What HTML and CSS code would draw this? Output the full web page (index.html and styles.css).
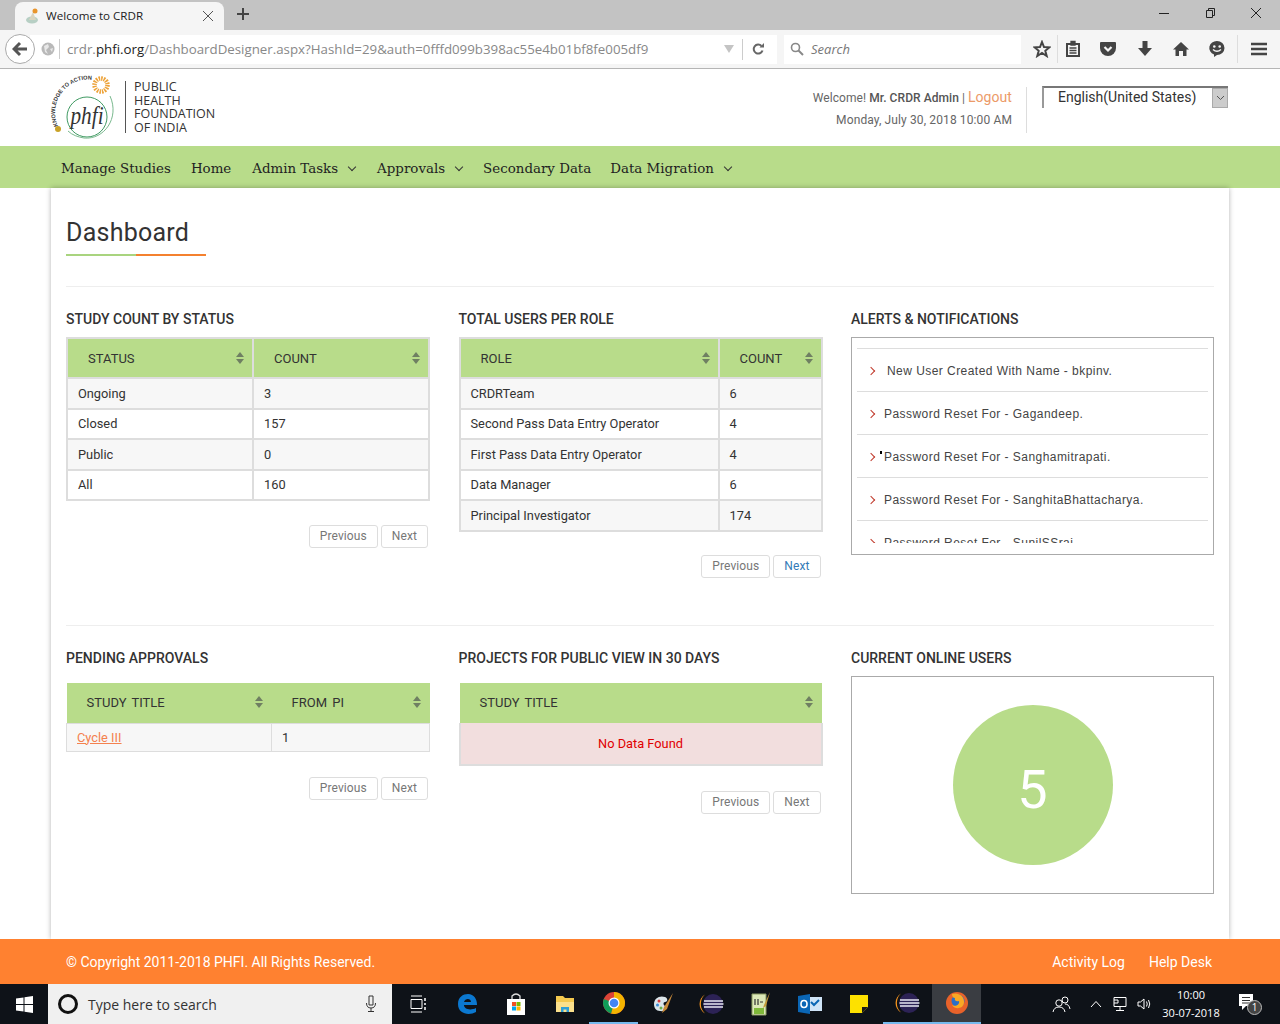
FILE: index.html
```html
<!DOCTYPE html>
<html lang="en">
<head>
    <meta charset="UTF-8">
    <title>Welcome to CRDR</title>
    <link rel="stylesheet" href="styles.css">
</head>
<body>
    <!-- Browser tab strip -->
    <div class="tabstrip">
        <div class="tab">
            <svg class="tab-icon" width="16" height="16" viewBox="0 0 16 16"><ellipse cx="7" cy="12" rx="6" ry="3.5" fill="#b7cfc4"/><path d="M4 12 L8 4 L11 12 Z" fill="#d9d4c0"/><circle cx="10" cy="3" r="2.5" fill="#e8942c"/></svg>
            <span class="tab-title">Welcome to CRDR</span>
            <svg class="tab-close" width="12" height="12" viewBox="0 0 12 12"><path d="M1 1 L11 11 M11 1 L1 11" stroke="#555" stroke-width="1" fill="none"/></svg>
        </div>
        <svg class="tab-new" width="14" height="14" viewBox="0 0 14 14"><path d="M7 1 V13 M1 7 H13" stroke="#444" stroke-width="2" fill="none"/></svg>
        <div class="win-controls">
            <svg width="12" height="12" viewBox="0 0 12 12"><path d="M1 6.5 H11" stroke="#222" fill="none"/></svg>
            <svg width="12" height="12" viewBox="0 0 12 12"><path d="M2.5 3.5 H8.5 V10.5 H2.5 Z M4.5 3.5 V1.5 H10.5 V8.5 H8.5" stroke="#222" fill="none"/></svg>
            <svg width="14" height="14" viewBox="0 0 14 14"><path d="M2 2 L12 12 M12 2 L2 12" stroke="#222" fill="none"/></svg>
        </div>
    </div>

    <!-- Browser toolbar -->
    <div class="toolbar">
        <div class="back-btn">
            <svg width="16" height="16" viewBox="0 0 16 16"><path d="M8 2 L2 8 L8 14 M2 8 H15" stroke="#555" stroke-width="3" fill="none"/></svg>
        </div>
        <div class="urlbar">
            <svg class="globe" width="14" height="14" viewBox="0 0 14 14"><circle cx="7" cy="7" r="6.5" fill="#b9b9b9"/><path d="M3 4 L7 2 L8 5 L5 8 L7 12 L4 10 Z M9 7 L12 6 L11 10 Z" fill="#e8e8e8"/></svg>
            <span class="url-text">crdr.<b>phfi.org</b>/DashboardDesigner.aspx?HashId=29&amp;auth=0fffd099b398ac55e4b01bf8fe005df9</span>
            <span class="url-drop"></span>
            <span class="url-sep"></span>
            <svg class="reload" width="14" height="14" viewBox="0 0 14 14"><path d="M11.5 8.5 A4.5 4.5 0 1 1 10.5 4" stroke="#666" stroke-width="2" fill="none"/><path d="M8.5 5.5 H13 V1 Z" fill="#666"/></svg>
        </div>
        <div class="searchbar">
            <svg width="14" height="14" viewBox="0 0 14 14"><circle cx="5.5" cy="5.5" r="4" stroke="#888" stroke-width="1.6" fill="none"/><path d="M8.5 8.5 L13 13" stroke="#888" stroke-width="2"/></svg>
            <span>Search</span>
        </div>
        <div class="tool-icons">
            <svg width="18" height="18" viewBox="0 0 18 18"><path d="M9 2 L11 7 L16.500 7.300 L12.300 10.800 L13.700 16 L9 13 L4.300 16 L5.700 10.800 L1.500 7.300 L7 7 Z" stroke="#444" stroke-width="2" fill="none"/></svg>
            <span class="tool-sep"></span>
            <svg width="16" height="18" viewBox="0 0 16 18"><path d="M2 4 H14 V16 H2 Z" stroke="#444" stroke-width="2" fill="none"/><path d="M6 1.500 H10 V5 H6 Z M4.500 8 H11.500 M4.500 10.500 H11.500 M4.500 13 H11.500" stroke="#444" stroke-width="1.300" fill="#444"/></svg>
            <svg width="18" height="18" viewBox="0 0 18 18"><path d="M2 2 H16 Q17 2 17 3 V8 A8 8 0 0 1 1 8 V3 Q1 2 2 2 Z" fill="#444"/><path d="M5.500 7 L9 10.500 L12.500 7" stroke="#f5f5f5" stroke-width="2.200" fill="none"/></svg>
            <svg width="16" height="18" viewBox="0 0 16 18"><path d="M5.500 1 H10.500 V8 H15 L8 16 L1 8 H5.500 Z" fill="#444"/></svg>
            <svg width="18" height="18" viewBox="0 0 18 18"><path d="M9 2 L17 9.500 H14.500 V16 H11 V11 H7 V16 H3.500 V9.500 H1 Z" fill="#444"/></svg>
            <svg width="18" height="18" viewBox="0 0 18 18"><path d="M9 1 A7.500 7 0 0 1 9 15 L6 17 V14.500 A7.500 7 0 0 1 9 1 Z" fill="#444"/><circle cx="6.300" cy="6.500" r="1.300" fill="#f5f5f5"/><circle cx="11.700" cy="6.500" r="1.300" fill="#f5f5f5"/><path d="M5 9.500 Q9 13 13 9.500" stroke="#f5f5f5" stroke-width="1.500" fill="none"/></svg>
            <span class="tool-sep"></span>
            <svg width="16" height="14" viewBox="0 0 16 14"><path d="M0 2 H16 M0 7 H16 M0 12 H16" stroke="#444" stroke-width="2.600"/></svg>
        </div>
    </div>

    <!-- Site header -->
    <header class="site-header">
        <div class="logo">
            <svg class="logo-mark" width="66" height="68" viewBox="0 0 66 68">
                <defs><path id="logoArc" d="M6 52 A33 33 0 0 1 42 6"/></defs>
                <text class="logo-arc"><textPath href="#logoArc">KNOWLEDGE TO ACTION</textPath></text>
                <circle cx="6" cy="55" r="3" fill="#c9a227"/>
                <circle cx="49" cy="11" r="6.500" fill="none" stroke="#eda33a" stroke-width="4.500" stroke-dasharray="1.500 1"/>
                <circle cx="35" cy="43" r="20" fill="none" stroke="#3f9a62"/>
                <path d="M58 22 C68 44 52 66 32 64 C26 63 20 61 16 57" fill="none" stroke="#79b98e"/>
                <text class="logo-phfi" transform="translate(35 50) scale(0.82 1)">phfi</text>
            </svg>
            <span class="logo-rule"></span>
            <div class="logo-name">PUBLIC<br>HEALTH<br>FOUNDATION<br>OF INDIA</div>
        </div>
        <div class="user-info">
            <div class="welcome">Welcome! <b>Mr. CRDR Admin</b> | <a href="#">Logout</a></div>
            <div class="date">Monday, July 30, 2018 10:00 AM</div>
        </div>
        <div class="lang-select">
            <span>English(United States)</span>
            <span class="lang-arrow"><svg width="9" height="6" viewBox="0 0 9 6"><path d="M1 1 L4.500 4.500 L8 1" stroke="#555" fill="none"/></svg></span>
        </div>
    </header>

    <nav class="main-nav">
        <a href="#">Manage Studies</a>
        <a href="#" class="home">Home</a>
        <a href="#" class="drop">Admin Tasks</a>
        <a href="#" class="drop tight">Approvals</a>
        <a href="#" class="tight">Secondary Data</a>
        <a href="#" class="drop">Data Migration</a>
    </nav>

    <!-- Main content -->
    <main class="content">
        <h1 class="page-title">Dashboard</h1>

        <section class="dash-row row-top">
            <div class="panel">
                <h4>STUDY COUNT BY STATUS</h4>
                <table class="grid col-status">
                    <thead><tr><th><span>STATUS</span></th><th><span>COUNT</span></th></tr></thead>
                    <tbody>
                        <tr><td>Ongoing</td><td>3</td></tr>
                        <tr><td>Closed</td><td>157</td></tr>
                        <tr><td>Public</td><td>0</td></tr>
                        <tr><td>All</td><td>160</td></tr>
                    </tbody>
                </table>
                <div class="pager"><a href="#">Previous</a><a href="#">Next</a></div>
            </div>
            <div class="panel">
                <h4>TOTAL USERS PER ROLE</h4>
                <table class="grid col-role">
                    <thead><tr><th><span>ROLE</span></th><th><span>COUNT</span></th></tr></thead>
                    <tbody>
                        <tr><td>CRDRTeam</td><td>6</td></tr>
                        <tr><td>Second Pass Data Entry Operator</td><td>4</td></tr>
                        <tr><td>First Pass Data Entry Operator</td><td>4</td></tr>
                        <tr><td>Data Manager</td><td>6</td></tr>
                        <tr><td>Principal Investigator</td><td>174</td></tr>
                    </tbody>
                </table>
                <div class="pager"><a href="#">Previous</a><a href="#" class="active">Next</a></div>
            </div>
            <div class="panel">
                <h4>ALERTS &amp; NOTIFICATIONS</h4>
                <div class="box alerts">
                    <ul>
                        <li class="first">New User Created With Name - bkpinv.</li>
                        <li>Password Reset For - Gagandeep.</li>
                        <li class="dotted">Password Reset For - Sanghamitrapati.</li>
                        <li>Password Reset For - SanghitaBhattacharya.</li>
                        <li>Password Reset For - SunilSSrai.</li>
                    </ul>
                </div>
            </div>
        </section>

        <section class="dash-row row-bottom">
            <div class="panel">
                <h4 class="wide">PENDING APPROVALS</h4>
                <table class="grid flat col-pending">
                    <thead><tr><th><span>STUDY TITLE</span></th><th><span>FROM PI</span></th></tr></thead>
                    <tbody>
                        <tr><td><a href="#" class="study-link">Cycle III</a></td><td>1</td></tr>
                    </tbody>
                </table>
                <div class="pager"><a href="#">Previous</a><a href="#">Next</a></div>
            </div>
            <div class="panel">
                <h4 class="wide">PROJECTS FOR PUBLIC VIEW IN 30 DAYS</h4>
                <table class="grid flat">
                    <thead><tr><th><span>STUDY TITLE</span></th></tr></thead>
                    <tbody>
                        <tr><td class="no-data">No Data Found</td></tr>
                    </tbody>
                </table>
                <div class="pager"><a href="#">Previous</a><a href="#">Next</a></div>
            </div>
            <div class="panel">
                <h4>CURRENT ONLINE USERS</h4>
                <div class="box online">
                    <div class="online-circle">5</div>
                </div>
            </div>
        </section>
    </main>

    <footer class="site-footer">
        <span>© Copyright 2011-2018 PHFI. All Rights Reserved.</span>
        <div class="footer-links"><a href="#">Activity Log</a><a href="#">Help Desk</a></div>
    </footer>

    <!-- Windows taskbar -->
    <div class="taskbar">
        <div class="start">
            <svg width="17" height="17" viewBox="0 0 17 17"><path d="M0 2.500 L7.500 1.400 V8 H0 Z M8.500 1.300 L17 0 V8 H8.500 Z M0 9 H7.500 V15.600 L0 14.500 Z M8.500 9 H17 V17 L8.500 15.700 Z" fill="#fff"/></svg>
        </div>
        <div class="task-search">
            <svg class="cortana" width="20" height="20" viewBox="0 0 20 20"><circle cx="10" cy="10" r="8.500" stroke="#111" stroke-width="3" fill="none"/></svg>
            <span>Type here to search</span>
            <svg class="mic" width="12" height="18" viewBox="0 0 12 18"><path d="M4 1 H8 V10 H4 Z M1.500 8 Q1.500 13 6 13 Q10.500 13 10.500 8 M6 13 V16 M3 16.500 H9" stroke="#333" fill="none"/></svg>
        </div>
        <div class="task-apps">
            <div class="app"><svg width="18" height="18" viewBox="0 0 18 18"><path d="M2 4.500 H13 V13.500 H2 Z M2 1 H13 M2 17 H13" stroke="#fff" fill="none"/><path d="M16 3 V6 M16 8 V10 M16 12 V15" stroke="#fff" stroke-width="1.500"/></svg></div>
            <div class="app"><svg width="22" height="22" viewBox="0 0 22 22"><path d="M2 11 C2 4 7 1 12 1 C18 1 21 6 21 12 H8 C8 16 14 18 20 15 V19 C13 23 2 21 2 11 Z M8 9 H15 C15 5 9 5 8 9 Z" fill="#0b78d0" fill-rule="evenodd"/></svg></div>
            <div class="app"><svg width="20" height="22" viewBox="0 0 20 22"><path d="M6 6 V3 Q10 -1 14 3 V6" stroke="#ddd" stroke-width="1.300" fill="none"/><rect x="1" y="6" width="18" height="16" fill="#fff"/><rect x="6" y="9" width="4" height="4" fill="#f25022"/><rect x="10.500" y="9" width="4" height="4" fill="#7fba00"/><rect x="6" y="13.500" width="4" height="4" fill="#00a4ef"/><rect x="10.500" y="13.500" width="4" height="4" fill="#ffb900"/></svg></div>
            <div class="app"><svg width="20" height="20" viewBox="0 0 20 20"><path d="M1 2 H8 L10 4 H19 V18 H1 Z" fill="#f4c94f"/><path d="M1 8 H19 V18 H1 Z" fill="#fbe08c"/><path d="M6 18 V13 H14 V18 H11.500 V15.500 H8.500 V18 Z" fill="#2f9fd8"/></svg></div>
            <div class="app app-open"><svg width="24" height="24" viewBox="0 0 24 24"><circle cx="12" cy="12" r="11" fill="#db4437"/><path d="M12 1 A11 11 0 0 1 23 12 H12 Z" fill="#f4b400"/><path d="M23 12 A11 11 0 0 1 9 22.500 L12 12 Z" fill="#f4b400"/><path d="M1.800 8 A11 11 0 0 0 9 22.500 L12 12 Z" fill="#0f9d58"/><circle cx="12" cy="12" r="5.500" fill="#fff"/><circle cx="12" cy="12" r="4.300" fill="#4285f4"/></svg></div>
            <div class="app"><svg width="24" height="24" viewBox="0 0 24 24"><path d="M3 12 C3 6 9 3 14 5 C17 6 17 10 14 10 C12 10 12 13 14 14 C16 16 13 20 9 19 C5 19 3 16 3 12 Z" fill="#dbe5ea"/><circle cx="8" cy="9" r="1.500" fill="#d83b3b"/><circle cx="6.500" cy="13" r="1.500" fill="#3a8fd8"/><circle cx="10" cy="16" r="1.500" fill="#6ab04c"/><path d="M22 1 L13 15 L11 21 L16 17 Z" fill="#c98b3a"/></svg></div>
            <div class="app"><svg width="26" height="26" viewBox="0 0 26 26"><circle cx="14" cy="13" r="10" fill="#2c2255"/><path d="M6 3.500 A11 11 0 0 0 6 22.500 A13 13 0 0 1 6 3.500 Z" fill="#f7941e"/><path d="M5 10 H24 M4.500 13 H24.500 M5 16 H24" stroke="#e8e8f2" stroke-width="1.300"/></svg></div>
            <div class="app"><svg width="20" height="24" viewBox="0 0 20 24"><path d="M1 2 H15 V23 H1 Z" fill="#dce8b8" stroke="#8a9a60"/><path d="M3 16 H13 V22 H3 Z" fill="#7fb83a"/><path d="M4 7 V13 M7 7 V13 M9 10 H12" stroke="#333" stroke-width="1.200"/><path d="M19 0 L13 13 L12 16 L15 14 Z" fill="#c49a3a"/></svg></div>
            <div class="app"><svg width="24" height="20" viewBox="0 0 24 20"><path d="M8 3 H24 V17 H8 Z" fill="#cfe4f7"/><path d="M13 8 L16 11 L21 6" stroke="#0a66b5" stroke-width="2" fill="none"/><path d="M0 2 L12 0 V20 L0 18 Z" fill="#0a66b5"/><ellipse cx="6" cy="10" rx="3" ry="3.500" stroke="#fff" stroke-width="1.600" fill="none"/></svg></div>
            <div class="app"><svg width="18" height="18" viewBox="0 0 18 18"><path d="M0 0 H18 V12 L12 18 H0 Z" fill="#fde100"/><path d="M18 12 L12 18 V12 Z" fill="#1b1b1b"/></svg></div>
            <div class="app app-open"><svg width="26" height="26" viewBox="0 0 26 26"><circle cx="14" cy="13" r="10" fill="#2c2255"/><path d="M6 3.500 A11 11 0 0 0 6 22.500 A13 13 0 0 1 6 3.500 Z" fill="#f7941e"/><path d="M5 10 H24 M4.500 13 H24.500 M5 16 H24" stroke="#e8e8f2" stroke-width="1.300"/></svg></div>
            <div class="app app-active"><svg width="24" height="24" viewBox="0 0 24 24"><circle cx="12" cy="12" r="11" fill="#e8622a"/><circle cx="13" cy="10" r="6.500" fill="#2a6fc9"/><path d="M7 3 C13 1 20 5 19 12 C18 18 10 19 7 14 C10 16 15 14 14 10 C11 11 9 9 10 7 C8 7 7 5 7 3 Z" fill="#f9a825"/></svg></div>
        </div>
        <div class="tray">
            <svg width="20" height="18" viewBox="0 0 20 18"><circle cx="7" cy="8" r="3.200" stroke="#fff" fill="none"/><path d="M1 17 Q2 12 7 12 Q12 12 13 17" stroke="#fff" fill="none"/><circle cx="13" cy="5" r="3" stroke="#fff" fill="none"/><path d="M13 9 Q17 9 18 14" stroke="#fff" fill="none"/></svg>
            <svg class="tray-up" width="12" height="8" viewBox="0 0 12 8"><path d="M1 7 L6 1.500 L11 7" stroke="#fff" fill="none"/></svg>
            <svg class="tray-net" width="16" height="16" viewBox="0 0 16 16"><path d="M1 1.500 H13 V10.500 H1 Z M7 10.500 V14 M3 14.500 H11 M1 4 H5 V7 H1" stroke="#fff" fill="none"/></svg>
            <svg width="16" height="16" viewBox="0 0 16 16"><path d="M1 6 H3.500 L7 3 V13 L3.500 10 H1 Z M9.500 5.500 Q11 8 9.500 10.500 M11.500 4 Q14 8 11.500 12" stroke="#fff" fill="none"/></svg>
            <div class="clock"><span>10:00</span><span>30-07-2018</span></div>
            <div class="action-center">
                <svg width="17" height="16" viewBox="0 0 17 16"><path d="M0 0 H14 V12 H7 L3 16 V12 H0 Z" fill="#fff"/><path d="M3 3.500 H11 M3 6.500 H11 M3 9 H11" stroke="#333"/></svg>
                <span class="notif-count">1</span>
            </div>
        </div>
    </div>
</body>
</html>
```

FILE: styles.css
```css
/* General Page Styling */
* {
    box-sizing: border-box;
}

body {
    margin: 0;
    width: 1280px;
    height: 1024px;
    overflow: hidden;
    display: flex;
    flex-direction: column;
    background: #fff;
    color: #333;
    font-family: Roboto, "Liberation Sans", sans-serif;
    font-size: 13px;
}

a {
    text-decoration: none;
    color: inherit;
}

/* Browser tab strip */
.tabstrip {
    height: 30px;
    flex: none;
    display: flex;
    align-items: flex-end;
    padding-left: 15px;
    background: #c3c3c3;
}

.tab {
    width: 209px;
    height: 28px;
    display: flex;
    align-items: center;
    padding: 0 10px;
    background: #f5f5f5;
    border-radius: 8px 8px 0 0;
    font-family: "Open Sans", sans-serif;
    font-size: 11.6px;
    color: #222;
}

.tab-icon {
    margin-right: 5px;
}

.tab-title {
    flex: 1;
    margin-top: -2px;
}

.tab-new {
    margin: 0 0 9px 12px;
}

.win-controls {
    margin: 0 0 10px auto;
    width: 122px;
    padding-right: 17px;
    display: flex;
    justify-content: space-between;
    align-items: center;
}

/* Browser toolbar */
.toolbar {
    height: 39px;
    flex: none;
    display: flex;
    align-items: center;
    padding-left: 5px;
    background: #f5f5f5;
    border-bottom: 1px solid #b5b5b5;
    font-family: "Open Sans", sans-serif;
}

.back-btn {
    width: 30px;
    height: 30px;
    flex: none;
    display: flex;
    align-items: center;
    justify-content: center;
    background: #fff;
    border: 1px solid #aaa;
    border-radius: 50%;
    position: relative;
    z-index: 1;
}

.urlbar {
    width: 747px;
    height: 29px;
    margin-left: -5px;
    display: flex;
    align-items: center;
    padding-left: 11px;
    background: #fff;
    font-size: 13.3px;
    color: #888;
}

.globe {
    margin-right: 4px;
}

.url-text {
    flex: 1;
    padding-left: 7px;
    border-left: 1px solid #ccc;
    white-space: nowrap;
    line-height: 20px;
}

.url-text b {
    font-weight: 400;
    color: #222;
}

.url-drop {
    width: 0;
    height: 0;
    margin-right: 8px;
    border-left: 5px solid transparent;
    border-right: 5px solid transparent;
    border-top: 8px solid #c4c4c4;
}

.url-sep {
    width: 1px;
    height: 21px;
    margin-right: 8px;
    background: #ccc;
}

.reload {
    margin-right: 12px;
}

.searchbar {
    width: 237px;
    height: 29px;
    margin-left: 7px;
    display: flex;
    align-items: center;
    gap: 7px;
    padding-left: 6px;
    background: #fff;
    font-size: 13px;
    font-style: italic;
    color: #777;
}

.tool-icons {
    flex: 1;
    display: flex;
    align-items: center;
    padding-left: 12px;
}

.tool-icons > :nth-child(2) { margin-left: 6px; }
.tool-icons > :nth-child(3) { margin-left: 7px; }
.tool-icons > :nth-child(4) { margin-left: 18px; }
.tool-icons > :nth-child(5) { margin-left: 20px; }
.tool-icons > :nth-child(6) { margin-left: 19px; }
.tool-icons > :nth-child(7) { margin-left: 18px; }
.tool-icons > :nth-child(8) { margin-left: 11px; }
.tool-icons > :nth-child(9) { margin-left: 13px; }

.tool-sep {
    width: 1px;
    height: 28px;
    background: #ddd;
}

/* Site header */
.site-header {
    height: 77px;
    flex: none;
    display: flex;
    padding: 5px 52px 0 52px;
}

.logo {
    display: flex;
    align-items: flex-start;
}

.logo-mark {
    overflow: visible;
}

.logo-arc {
    font-family: "Liberation Sans", sans-serif;
    font-size: 5.6px;
    font-weight: 700;
    fill: #333;
}

.logo-phfi {
    font-family: "Liberation Serif", serif;
    font-size: 26px;
    font-style: italic;
    text-anchor: middle;
    fill: #333;
}

.logo-rule {
    width: 1px;
    height: 52px;
    margin: 7px 0 0 7px;
    background: #555;
}

.logo-name {
    margin: 6px 0 0 8px;
    font-family: "Open Sans", sans-serif;
    font-size: 12.500px;
    line-height: 13.700px;
    color: #333;
}

.user-info {
    margin-left: auto;
    margin-top: 13px;
    padding-right: 14px;
    height: 46px;
    border-right: 1px solid #ddd;
    text-align: right;
    font-size: 12px;
    letter-spacing: 0.12px;
    color: #666;
}

.welcome {
    line-height: 20px;
    letter-spacing: 0.06px;
}

.welcome b {
    font-weight: 500;
    color: #555;
}

.welcome a {
    color: #ec9a68;
    font-size: 14px;
}

.date {
    margin-top: 2px;
    line-height: 20px;
}

.lang-select {
    width: 186px;
    height: 22px;
    margin: 12px 0 0 15px;
    display: flex;
    align-items: center;
    justify-content: space-between;
    padding: 0 0 2px 14px;
    border-top: 2px solid #777;
    border-left: 2px solid #999;
    font-size: 14px;
    color: #333;
}

.lang-arrow {
    width: 16px;
    height: 20px;
    margin-bottom: -2px;
    display: flex;
    align-items: center;
    justify-content: center;
    background: #ccc;
    border: 1px solid #aaa;
}

/* Green menu bar */
.main-nav {
    height: 42px;
    flex: none;
    display: flex;
    align-items: center;
    padding: 2px 0 0 61px;
    background: #b8dc8a;
    font-family: "DejaVu Serif", serif;
    font-size: 13.4px;
    color: #222;
}

.main-nav a {
    margin-right: 20px;
}

.main-nav a.home {
    margin-right: 21px;
}

.main-nav a.tight {
    margin-right: 19px;
}

.main-nav .drop::after {
    content: "";
    display: inline-block;
    width: 5px;
    height: 5px;
    margin: 0 2px 3px 11px;
    border-right: 1px solid #333;
    border-bottom: 1px solid #333;
    transform: rotate(45deg);
}

/* Main card */
.content {
    flex: 1;
    width: 1178px;
    margin-left: 51px;
    padding: 0 15px;
    background: #fff;
    box-shadow: 0 0 5px rgba(0, 0, 0, 0.3);
}

.page-title {
    width: 140px;
    height: 68px;
    margin: 0;
    padding-top: 29px;
    border-bottom: 2px solid;
    border-image: linear-gradient(to right, #a9d47f 50%, #f4812f 50%) 1;
    font-size: 25px;
    font-weight: 400;
    line-height: 32px;
    letter-spacing: 0.25px;
    color: #333;
}

.dash-row {
    display: grid;
    grid-template-columns: 364px 364px 363px;
    column-gap: 28.5px;
    border-top: 1px solid #eee;
}

.row-top {
    height: 339px;
    margin-top: 30px;
}

.panel h4 {
    height: 16px;
    margin: 24px 0 10px 0;
    font-size: 14px;
    font-weight: 500;
    line-height: 16px;
    color: #333;
}

.panel h4.wide {
    margin-bottom: 17px;
}

/* Tables */
.grid {
    width: 100%;
    border-collapse: collapse;
    table-layout: fixed;
    border: 2px solid #ddd;
}

.col-status th:first-child {
    width: 186px;
}

.col-role th:first-child {
    width: 259px;
}

.col-pending th:first-child {
    width: 205px;
}

.grid th {
    height: 40px;
    padding: 0 10px 0 20px;
    background: #b8dc8a;
    border-right: 2px solid #ddd;
    text-align: left;
    font-size: 13px;
    font-weight: 400;
    word-spacing: 2px;
    color: #333;
    position: relative;
}

.grid th::before,
.grid th::after {
    content: "";
    position: absolute;
    right: 8px;
    width: 0;
    height: 0;
    border-left: 4.5px solid transparent;
    border-right: 4.5px solid transparent;
}

.grid th::before {
    top: 13px;
    border-bottom: 5px solid #6f7f62;
}

.grid th::after {
    top: 20px;
    border-top: 5px solid #6f7f62;
}

.grid td {
    height: 30.5px;
    padding: 0 10px;
    border: 2px solid #ddd;
    font-size: 12.8px;
    color: #333;
}

.grid tbody tr:nth-child(odd) td {
    background: #f7f7f7;
}

/* Tables of the lower row have no border round the green header */
.grid.flat {
    border: none;
}

.grid.flat th {
    padding: 0 10px 1px 20px;
    border: none;
}

.grid.flat th::before,
.grid.flat th::after {
    right: 9px;
}

.grid.flat td {
    height: 28px;
    border: 1px solid #ddd;
}

.grid.flat tbody tr td.no-data {
    height: 42px;
    border: 2px solid #ddd;
    border-top: none;
    background: #f2dede;
    text-align: center;
    color: #e00000;
}

.study-link {
    color: #f4814f;
    text-decoration: underline;
}

.pager {
    display: flex;
    justify-content: flex-end;
    gap: 3px;
    margin-top: 25px;
    padding-right: 2px;
}

.col-status + .pager {
    margin-top: 24px;
}

.col-role + .pager {
    margin-top: 23px;
}

.pager a {
    height: 23px;
    padding: 0 10px;
    background: #fff;
    border: 1px solid #ddd;
    border-radius: 3px;
    font-size: 12px;
    letter-spacing: 0.1px;
    line-height: 20px;
    color: #777;
}

.pager a.active {
    color: #337ab7;
}

/* Bordered boxes */
.box {
    height: 218px;
    background: #fff;
    border: 1px solid #aaa;
}

.alerts {
    padding: 10px 5px 0 5px;
}

.alerts ul {
    height: 195px;
    margin: 0;
    padding: 0;
    list-style: none;
    overflow: hidden;
}

.alerts li {
    height: 43px;
    padding: 1px 0 0 27px;
    border-top: 1px solid #ddd;
    font-family: "Liberation Sans", sans-serif;
    font-size: 12px;
    line-height: 43px;
    letter-spacing: 0.45px;
    color: #444;
    position: relative;
}

.alerts li.first {
    padding-left: 30px;
}

.alerts li::before {
    content: "";
    position: absolute;
    left: 11px;
    top: 19px;
    width: 5px;
    height: 5px;
    border-top: 1px solid #c0392b;
    border-right: 1px solid #c0392b;
    transform: rotate(45deg);
}

.alerts li.dotted::after {
    content: "";
    position: absolute;
    left: 23px;
    top: 16px;
    width: 2px;
    height: 3px;
    background: #000;
}

.online {
    display: flex;
    justify-content: center;
    padding-top: 28px;
}

.online-circle {
    width: 160px;
    height: 160px;
    display: flex;
    align-items: center;
    justify-content: center;
    padding-top: 9px;
    background: #b8dc8a;
    border-radius: 50%;
    font-size: 54px;
    color: #fff;
}

/* Footer */
.site-footer {
    height: 45px;
    flex: none;
    display: flex;
    align-items: center;
    justify-content: space-between;
    padding: 0 68px 0 66px;
    background: #ff8130;
    font-size: 14px;
    color: #fff;
}

.footer-links {
    display: flex;
    gap: 24px;
}

/* Windows taskbar */
.taskbar {
    height: 40px;
    flex: none;
    display: flex;
    align-items: center;
    background: #0e1218;
    font-family: "Open Sans", sans-serif;
    color: #fff;
}

.start {
    width: 48px;
    height: 40px;
    flex: none;
    display: flex;
    align-items: center;
    justify-content: center;
}

.task-search {
    width: 344px;
    height: 40px;
    flex: none;
    display: flex;
    align-items: center;
    padding-left: 10px;
    background: #f0f0f0;
    font-size: 14px;
    color: #333;
}

.cortana {
    margin-right: 10px;
}

.mic {
    margin-left: auto;
    margin-right: 15px;
}

.task-apps {
    display: flex;
    margin-left: 1px;
}

.app {
    width: 49px;
    height: 40px;
    display: flex;
    align-items: center;
    justify-content: center;
}

.app-open {
    border-bottom: 2px solid #76b9ed;
}

.app-active {
    background: #3a3d42;
    border-bottom: 2px solid #76b9ed;
}

.tray {
    flex: 1;
    display: flex;
    align-items: center;
    gap: 8px;
    padding-left: 71px;
}

.tray-up {
    margin-left: 10px;
}

.tray-net {
    margin-left: 3px;
}

.clock {
    width: 60px;
    display: flex;
    flex-direction: column;
    align-items: center;
    font-size: 11px;
    line-height: 18px;
}

.action-center {
    position: relative;
    margin-left: 10px;
}

.notif-count {
    position: absolute;
    left: 8px;
    top: 6px;
    width: 15px;
    height: 15px;
    background: #444;
    border: 1px solid #bbb;
    border-radius: 50%;
    font-size: 10px;
    line-height: 13px;
    text-align: center;
}
```
